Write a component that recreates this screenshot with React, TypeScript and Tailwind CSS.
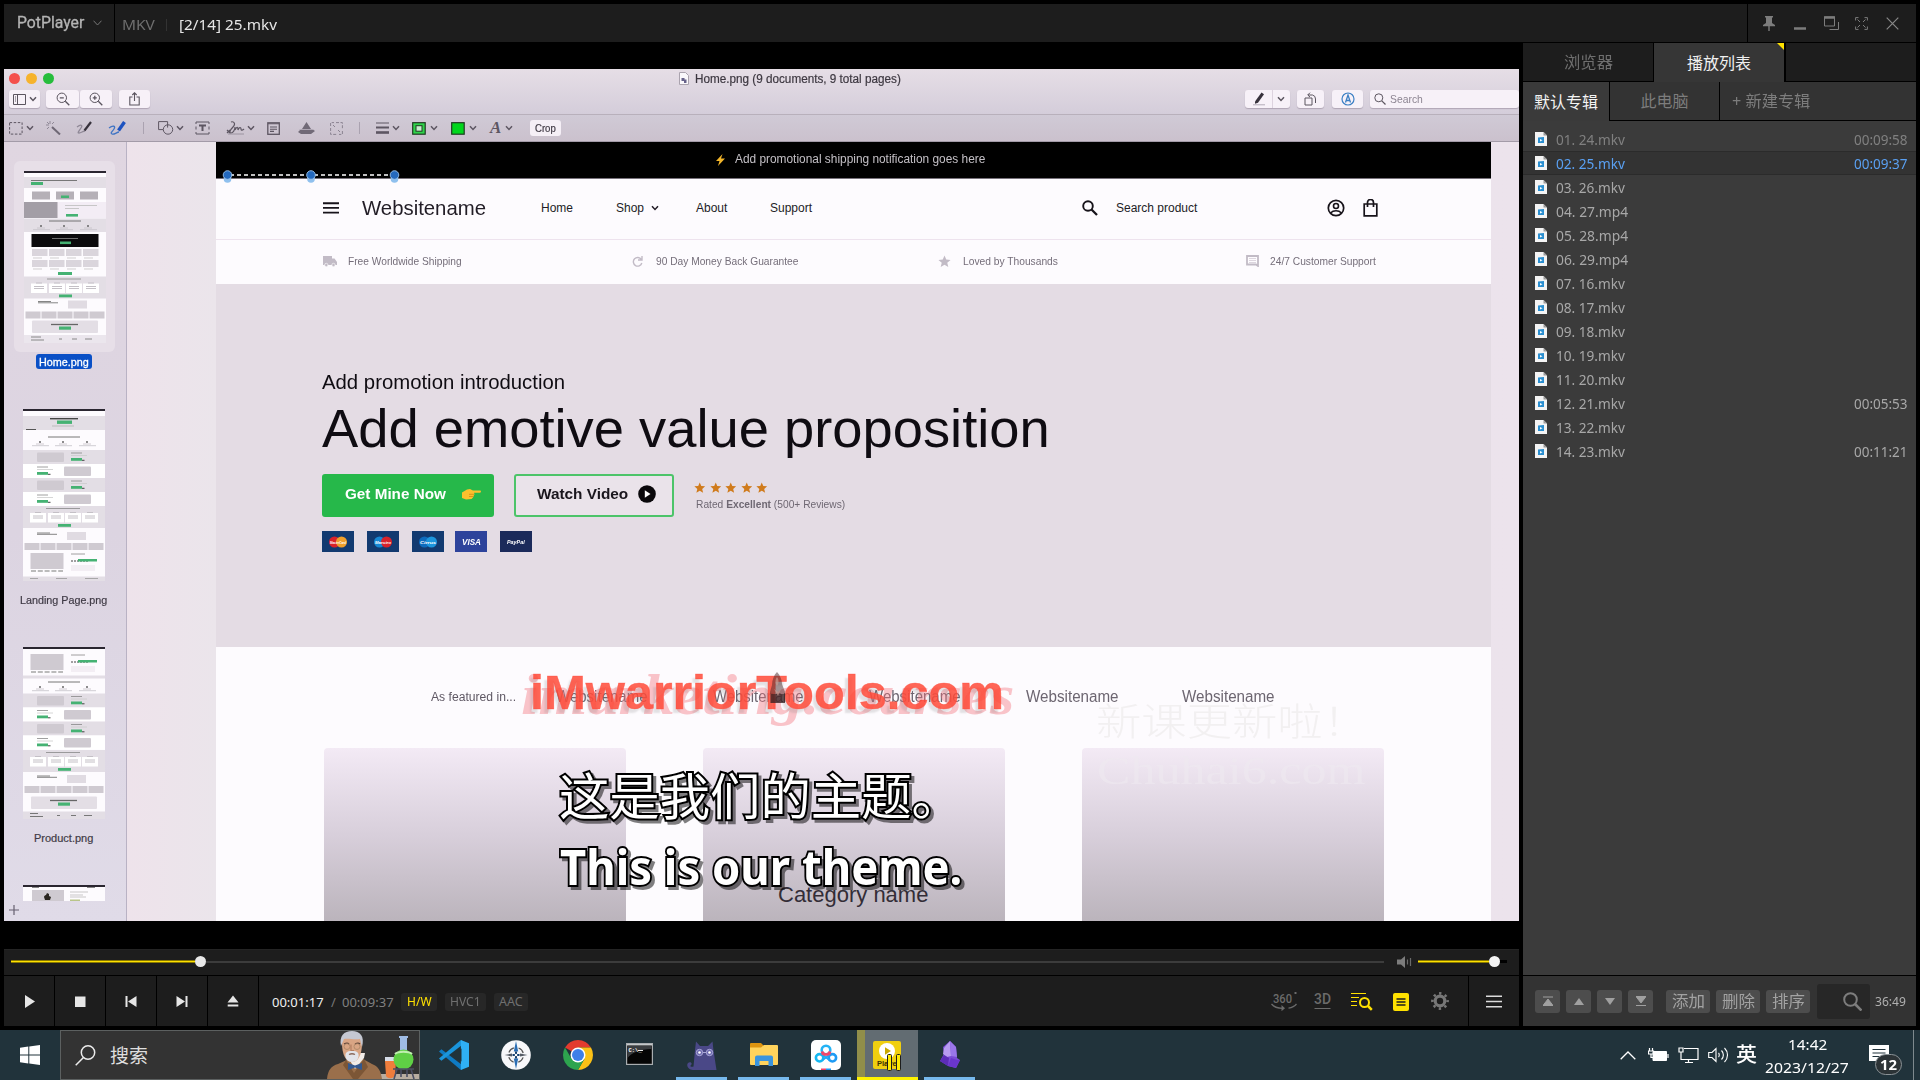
import React, { useLayoutEffect, useRef, useState } from "react";

const UI = "font-['Noto_Sans','Noto_Sans_CJK_SC',sans-serif]";
const HELV = "font-['Liberation_Sans',sans-serif]";

/* One line of text condensed or expanded to a given width. */
function Fit({ w, className = "", children }: { w: number; className?: string; children: React.ReactNode }) {
  const ref = useRef<HTMLSpanElement>(null);
  const [k, setK] = useState(1);
  useLayoutEffect(() => {
    if (ref.current) setK(w / ref.current.offsetWidth);
  }, [w]);
  return (
    <span className={`block shrink-0 whitespace-nowrap ${className}`} style={{ width: w }}>
      <span ref={ref} className="inline-block origin-left" style={{ transform: `scaleX(${k})` }}>
        {children}
      </span>
    </span>
  );
}

function Svg({ w, h, className = "", children, vb }: { w: number; h: number; className?: string; children: React.ReactNode; vb?: string }) {
  return (
    <svg width={w} height={h} viewBox={vb ?? `0 0 ${w} ${h}`} fill="none" className={`block shrink-0 ${className}`}>
      {children}
    </svg>
  );
}

const Chevron = ({ className = "" }: { className?: string }) => (
  <Svg w={8} h={6} className={className}>
    <path d="M1 1.200 4 4.400 7 1.200" stroke="currentColor" strokeWidth="1.500" />
  </Svg>
);

/* ---------- Title bar ---------- */
function TitleBar() {
  return (
    <div className={`mx-1 mt-1 flex h-[38px] shrink-0 items-center bg-[#1d1d1d] ${UI}`}>
      <div className="flex h-full w-[111px] items-center border-r border-black pl-[13px] pb-px">
        <Fit w={67} className="font-['Roboto',sans-serif] text-[16px] leading-5 text-[#b4b4b4] [-webkit-text-stroke:0.300px_#b4b4b4]">PotPlayer</Fit>
        <Svg w={9} h={6} className="ml-[9px]">
          <path d="M.5.7 4.500 5 8.500.7" stroke="#777" />
        </Svg>
      </div>
      <Fit w={33} className="ml-[7px] mt-[2px] text-[15px] leading-5 text-[#6f6f6f]">MKV</Fit>
      <div className="ml-[11px] mt-1 h-3 w-px bg-[#333]" />
      <Fit w={98} className="ml-[12px] mt-[2px] text-[15px] leading-5 text-[#e6e6e6]">[2/14] 25.mkv</Fit>
      <div className="ml-auto flex h-full w-[169px] items-center border-l border-black pl-[14px] text-[#7c7c7c]">
        <Svg w={14} h={15}>
          <path d="M3 0h8v1.500H10V7l3 2v1.300H7.700V15H6.300v-4.700H1V9l3-2V1.500H3Z" fill="#7c7c7c" />
        </Svg>
        <Svg w={12} h={3} className="ml-[18px] mt-[10px]">
          <path d="M0 1.500h12" stroke="#7c7c7c" strokeWidth="2.500" />
        </Svg>
        <Svg w={15} h={15} className="ml-[18px]">
          <path d="M.5 1h10v9H.5Z" stroke="#7c7c7c" />
          <path d="M0 1.500h11" stroke="#7c7c7c" strokeWidth="2.500" />
          <path d="M14.500 6v7.500H5.500" stroke="#7c7c7c" />
        </Svg>
        <Svg w={13} h={13} className="ml-[16px]">
          <path d="M.6 3.500V.6h2.900M9.500.6h2.900v2.900M12.400 9.500v2.900H9.500M3.500 12.400H.6V9.500M2.500 2.500 5 5M10.500 2.500 8 5M10.500 10.500 8 8M2.500 10.500 5 8" stroke="#7c7c7c" />
        </Svg>
        <Svg w={13} h={13} className="ml-[18px]">
          <path d="m.7.7 11.600 11.600M12.300.7.700 12.300" stroke="#888" strokeWidth="1.200" />
        </Svg>
      </div>
    </div>
  );
}

/* ---------- Page thumbnails ---------- */
const G = "#45b273";
const gray = "#cfcad1";
const pale = "#e3dee5";

function FourQuotes({ y }: { y: number }) {
  return (
    <g>
      <rect y={y} width="82" height="22" fill={pale} />
      <path d={`M23 ${y + 2.5}h34`} stroke="#888" strokeWidth=".8" />
      {[7, 25, 42, 59].map((x) => (
        <g key={x}>
          <rect x={x} y={y + 7} width="16" height="9.500" fill="#fff" />
          <path d={`M${x + 5} ${y + 6.5}h6M${x + 3} ${y + 10}h10M${x + 3} ${y + 12}h10`} stroke="#c4c0c6" strokeWidth="1" />
        </g>
      ))}
      <rect x="35" y={y + 18} width="13" height="2.800" fill={G} />
    </g>
  );
}
function Rows({ y }: { y: number }) {
  return (
    <g>
      {[0, 1, 2, 3].map((i) => {
        const t = y + i * 14;
        const even = i % 2 === 0;
        const bx = even ? 14 : 41;
        const gx = even ? 48 : 14;
        return (
          <g key={i}>
            <rect y={t} width="82" height="14" fill={even ? pale : "#fff"} />
            <rect x={bx} y={t + 2.5} width="27" height="9.500" rx="1" fill={gray} />
            <path d={`M${gx} ${t + 3}h11`} stroke="#888" strokeWidth=".8" />
            <path d={`M${gx} ${t + 5.5}h16`} stroke="#ccc" strokeWidth=".8" />
            <rect x={gx} y={t + 8} width="11" height="2.800" fill={G} />
            <path d={`M${gx + 11} ${t + 10.3}h2.500`} stroke="#444" strokeWidth="1" />
          </g>
        );
      })}
    </g>
  );
}
function Five({ y }: { y: number }) {
  return (
    <g>
      <path d={`M14 ${y - 10}h13M14 ${y - 8.7}h20`} stroke="#777" strokeWidth=".9" />
      <rect x="44" y={y - 11} width="19" height="8" fill="#e0dbe2" />
      {[1.5, 17.5, 33.5, 49.5, 65.5].map((x) => (
        <rect key={x} x={x} y={y} width="15" height="7" fill={gray} />
      ))}
    </g>
  );
}
function Gallery({ y }: { y: number }) {
  return (
    <g>
      <rect x="7.500" y={y} width="33" height="16" fill={gray} />
      <path d={`M8 ${y + 18}h32`} stroke="#bbb" strokeWidth="2" strokeDasharray="5 1.800" />
      <path d={`M48 ${y + 1}h14`} stroke="#888" strokeWidth=".8" />
      <path d={`M48 ${y + 8}h18`} stroke="#444" strokeWidth="1" strokeDasharray="2 1" />
      <rect x="55" y={y + 6} width="19" height="2.500" fill={G} />
      <rect x="48" y={y + 12} width="24" height="6" fill="#f3eef4" />
    </g>
  );
}
function Three({ y }: { y: number }) {
  return (
    <g>
      <path d={`M25 ${y}h32`} stroke="#666" strokeWidth=".9" />
      {[17, 40, 64].map((x) => (
        <g key={x}>
          <circle cx={x} cy={y + 5} r="1" fill="#666" />
          <path d={`M${x - 4} ${y + 7}h8M${x - 8} ${y + 8.7}h17`} stroke="#c4c0c6" strokeWidth=".8" />
        </g>
      ))}
    </g>
  );
}
function Cta({ y }: { y: number }) {
  return (
    <g>
      <rect x="8" y={y} width="66" height="12.500" rx="1" fill={pale} />
      <path d={`M27 ${y + 4}h27`} stroke="#666" strokeWidth="1.300" />
      <rect x="35" y={y + 6} width="12" height="3.200" fill={G} />
    </g>
  );
}
function Thumb({ kind, h = 172 }: { kind: "home" | "landing" | "product" | "last"; h?: number }) {
  return (
    <svg width="82" height={h} viewBox={`0 0 82 ${h}`} className="block shrink-0 overflow-hidden">
      <rect width="82" height={h} fill="#fdfbfe" />
      <rect width="82" height="2" fill="#2a2630" />
      {kind === "home" && (
        <g>
          <rect y="6" width="82" height="11" fill={pale} />
          <path d="M7 9.500h46" stroke="#777" strokeWidth="1.200" />
          <rect x="7" y="11" width="12" height="3" fill={G} />
          <rect x="8" y="20.500" width="18" height="8" fill="#b5b0b7" />
          <rect x="32" y="20.500" width="18" height="8" fill="#b5b0b7" />
          <rect x="56" y="20.500" width="18" height="8" fill="#b5b0b7" />
          <rect x="37" y="24.500" width="8" height="2.500" fill={G} />
          <rect y="31" width="82" height="16" fill="#f3edf5" />
          <rect y="31" width="33.500" height="16" fill="#a39ea6" />
          <path d="M41 34.500h32M41 37.500h14" stroke="#bbb" strokeWidth=".8" />
          <rect x="42" y="43" width="12" height="2.600" fill={G} />
          <rect y="47.500" width="82" height="13.500" fill={pale} />
          <Three y={50} />
          <rect x="7.500" y="63" width="67" height="13" fill="#0c0b0d" />
          <path d="M28 67.500h26" stroke="#888" strokeWidth=".8" />
          <rect x="36" y="70.500" width="11" height="2.600" fill={G} />
          {[8, 25, 42, 59].map((x) => (
            <g key={x}>
              <rect x={x} y="78" width="15.500" height="7" fill="#dad5dc" />
              <rect x={x} y="89" width="15.500" height="7" fill="#dad5dc" />
              <path d={`M${x + 1} 87h9M${x + 1} 98h9`} stroke="#bbb" strokeWidth=".7" />
            </g>
          ))}
          <rect x="34" y="101" width="14" height="3" fill={G} />
          <FourQuotes y={105.5} />
          <Five y={140.5} />
          <Cta y={149.5} />
          <rect y="164" width="82" height="8" fill="#ebe6ed" />
          <path d="M7 166h10M7 169h13M35 168h3M48 168h5M61 168h7" stroke="#888" strokeWidth="1" />
        </g>
      )}
      {kind === "landing" && (
        <g>
          <rect y="7" width="82" height="14" fill={pale} />
          <path d="M27 9.700h28" stroke="#444" strokeWidth="1.400" />
          <rect x="34" y="11.500" width="15" height="3.400" fill={G} />
          <path d="M29 17h22" stroke="#bbb" />
          <path d="M3 20.500h10" stroke="#555" />
          <Three y={28} />
          <Rows y={41} />
          <FourQuotes y={97} />
          <Five y={134} />
          <Gallery y={144} />
          <rect y="167.500" width="82" height="4.500" fill={pale} />
          <path d="M7 169.500h8M33 169.500h11M62 169.500h13" stroke="#999" strokeWidth=".8" />
        </g>
      )}
      {kind === "product" && (
        <g>
          <Gallery y={7} />
          <rect y="28.500" width="82" height="3" fill={pale} />
          <Three y={35} />
          <Rows y={46.5} />
          <FourQuotes y={103} />
          <Five y={139} />
          <Cta y={149.5} />
          <rect y="164.500" width="82" height="7.500" fill={pale} />
          <path d="M7 166.500h8M7 169.500h13M34 168.500h3M48 168.500h5M61 168.500h8" stroke="#777" strokeWidth="1" />
        </g>
      )}
      {kind === "last" && (
        <g>
          <path d="M9 2.500h7M64 2.500h8" stroke="#888" />
          <rect x="9" y="5" width="32" height="11" fill={gray} />
          <path d="M21 12c0-1 1-2 2-2l1-2 2 1v2l2 1-1 3h-5Z" fill="#2a2620" />
          <path d="M47 7h18M47 10h13M47 12h16" stroke="#bbb" strokeWidth=".8" />
          <rect x="47" y="14.500" width="10" height="1.500" fill="#b9c58a" />
        </g>
      )}
    </svg>
  );
}

/* ---------- Preview window inside the video ---------- */
const btn = "flex h-[18px] shrink-0 items-center rounded-[3px] bg-[#f7f1f8] text-[#5b555f] shadow-[0_1px_1px_rgba(120,105,125,0.4)]";

function PreviewHeader() {
  return (
    <div className="flex h-[46px] shrink-0 flex-col border-b border-[#b8b0bb] bg-gradient-to-b from-[#e6dee6] to-[#d4cdda]">
      <div className="flex h-[18px] items-center pl-[5px]">
        <div className="h-[11px] w-[11px] rounded-full bg-[#f4504c]" />
        <div className="ml-[6px] h-[11px] w-[11px] rounded-full bg-[#f6b32c]" />
        <div className="ml-[6px] h-[11px] w-[11px] rounded-full bg-[#26bd3c]" />
        <Svg w={10} h={13} className="ml-[625px]">
          <path d="M.5.5h6l3 3v9h-9Z" fill="#faf8fb" stroke="#aaa3ae" />
          <path d="M2.500 6h3v1.500h2V11H5V9H2.500Z" fill="#67628a" />
        </Svg>
        <Fit w={206} className="ml-[6px] mt-px text-[12px] leading-4 text-[#3d3841] [-webkit-text-stroke:0.200px_#3d3841]">Home.png (9 documents, 9 total pages)</Fit>
      </div>
      <div className="flex h-[24px] items-center pl-[5px]">
        <div className={`${btn} w-[31px] pl-1`}>
          <Svg w={13} h={11}>
            <path d="M.5.5h12v10H.5ZM4.500.5v10M2 3h1M2 5h1M2 7h1" stroke="currentColor" />
          </Svg>
          <Chevron className="ml-[3px]" />
        </div>
        <div className={`${btn} ml-[6px] w-[33px] justify-center`}>
          <Svg w={14} h={14}>
            <circle cx="5.800" cy="5.800" r="4.700" stroke="currentColor" />
            <path d="m9.300 9.300 4 4M3.800 5.800h4" stroke="currentColor" strokeWidth="1.300" />
          </Svg>
        </div>
        <div className={`${btn} ml-px w-[32px] justify-center`}>
          <Svg w={14} h={14}>
            <circle cx="5.800" cy="5.800" r="4.700" stroke="currentColor" />
            <path d="m9.300 9.300 4 4M3.800 5.800h4M5.800 3.800v4" stroke="currentColor" strokeWidth="1.300" />
          </Svg>
        </div>
        <div className={`${btn} ml-[7px] w-[31px] justify-center`}>
          <Svg w={11} h={14}>
            <path d="M3.500 5H.8v8h9.400V5H7.500M5.500 9V1M3.300 3l2.200-2.200L7.700 3" stroke="currentColor" strokeWidth="1.100" />
          </Svg>
        </div>
        <div className={`${btn} ml-[1095px] w-[45px]`}>
          <Svg w={15} h={14} className="ml-[7px]">
            <path d="M3 9.500 9.500.5l2.500 1.700-6 8.600-3 1Z" fill="#37323c" />
            <path d="M1 12.800h12" stroke="#b3acb8" />
          </Svg>
          <div className="ml-[5px] h-full w-px bg-[#ddd3df]" />
          <Chevron className="ml-[4px]" />
        </div>
        <div className={`${btn} ml-[7px] w-[27px] justify-center`}>
          <Svg w={13} h={14}>
            <path d="M1 6h7v7H1ZM4 3h4.500a4 4 0 0 1 3 4v4M6 .7 3.700 3 6 5" stroke="currentColor" />
          </Svg>
        </div>
        <div className={`${btn} ml-[8px] w-[31px] justify-center`}>
          <Svg w={14} h={14}>
            <circle cx="7" cy="7" r="6" stroke="#3b7fc4" strokeWidth="1.200" />
            <path d="M4.500 10.500 7 3l2.500 7.500M5.500 8.500h3" stroke="#3b7fc4" strokeWidth="1.300" />
          </Svg>
        </div>
        <div className={`${btn} ml-[7px] w-[149px] pl-1`}>
          <Svg w={12} h={12}>
            <circle cx="4.800" cy="4.800" r="4" stroke="currentColor" />
            <path d="m7.800 7.800 3.700 3.700" stroke="currentColor" strokeWidth="1.200" />
          </Svg>
          <Fit w={33} className="ml-[4px] text-[11px] leading-4 text-[#8d8592]">Search</Fit>
        </div>
      </div>
    </div>
  );
}

function PreviewTools() {
  return (
    <div className="flex h-[27px] shrink-0 items-center border-b border-[#a39ba8] bg-gradient-to-b from-[#d0cad6] to-[#cbc1cd] pl-[5px] text-[#5d5662]">
      <Svg w={14} h={13}>
        <rect x=".6" y=".6" width="12.500" height="11.500" stroke="currentColor" strokeDasharray="2.500 1.600" />
      </Svg>
      <Chevron className="ml-[3px]" />
      <Svg w={15} h={14} className="ml-[12px]">
        <path d="m6 6 8 7.500" stroke="#6f6875" strokeWidth="2" />
        <path d="M4 0v3M0 4h3M1 1l2 2M8 1 6 3M1 8l2-2" stroke="#8f8896" />
      </Svg>
      <Svg w={17} h={14} className="ml-[15px]">
        <path d="M1 6c4-3 6-2 4 1s-4 5-2 5 4-2 6-2" stroke="#8f8896" strokeWidth="1.300" />
        <path d="M8.500 9.500 15 1" stroke="#37323c" strokeWidth="2.200" />
      </Svg>
      <Svg w={19} h={14} className="ml-[15px]">
        <path d="M1 7c4-3 7-2 5 1s-4 4-2 5 5-2 7-2" stroke="#3f74c4" strokeWidth="1.300" />
        <path d="M10.500 9.500 16.500 1" stroke="#1d53c0" strokeWidth="3.400" />
      </Svg>
      <div className="ml-[16px] h-3 w-px bg-[#aaa2b0]" />
      <Svg w={16} h={14} className="ml-[14px]">
        <path d="M.6.6h9v6M.6.6v8H5" stroke="currentColor" />
        <circle cx="10" cy="8.500" r="4.700" stroke="currentColor" />
      </Svg>
      <Chevron className="ml-[2px]" />
      <Svg w={15} h={14} className="ml-[11px]">
        <path d="M1 3V1h13v2M1 11v2h13v-2M1 5.500v3M14 5.500v3" stroke="currentColor" />
        <path d="M4 4.500h7M7.500 4v6" stroke="currentColor" strokeWidth="2" />
      </Svg>
      <Svg w={20} h={14} className="ml-[16px]">
        <path d="M5 1c3-1 5 2 2 5s-4 6-2 6 4-3 4-6M1 9l3 3M4 9l-3 3M9 9c2-4 3-3 3 0 1-3 3-3 3-1s2 1 3 0" stroke="currentColor" strokeWidth="1.200" />
        <path d="M2 13h16" stroke="#8f8896" strokeWidth=".8" />
      </Svg>
      <Chevron className="ml-[1px]" />
      <Svg w={13} h={13} className="ml-[12px]">
        <rect x=".8" y=".8" width="11.500" height="11.500" stroke="currentColor" strokeWidth="1.300" />
        <path d="M1 1.700h11M3 5h7M3 7.200h7M3 9.400h4" stroke="currentColor" strokeWidth="1.100" />
      </Svg>
      <Svg w={18} h={13} className="ml-[18px]">
        <path d="M8.500 0 13 7H4ZM0 10l3-3h11l3 2-4 3H3Z" fill="#716a77" />
        <path d="M1 7.500h15" stroke="#bdb5c2" strokeWidth=".8" />
      </Svg>
      <Svg w={13} h={13} className="ml-[14px]">
        <path d="M.6 4V.6H4M12.400 9v3.400H9M6 .6h6.400v6M.6 6v6.400H7M3 3l2 2M10 10 8 8" stroke="#8a8391" strokeDasharray="3 1.500" />
      </Svg>
      <div className="ml-[16px] h-3 w-px bg-[#aaa2b0]" />
      <Svg w={13} h={12} className="ml-[16px]">
        <path d="M0 1h13" stroke="currentColor" />
        <path d="M0 5.500h13" stroke="currentColor" strokeWidth="2" />
        <path d="M0 10.500h13" stroke="currentColor" strokeWidth="2.600" />
      </Svg>
      <Chevron className="ml-[3px]" />
      <Svg w={14} h={13} className="ml-[12px]">
        <rect x=".7" y=".7" width="12.500" height="11.500" fill="#2fd44a" stroke="#203a22" strokeWidth="1.200" />
        <rect x="4" y="3.700" width="6" height="5.500" fill="#c9efcf" stroke="#203a22" />
      </Svg>
      <Chevron className="ml-[4px]" />
      <Svg w={14} h={13} className="ml-[13px]">
        <rect x=".7" y=".7" width="12.500" height="11.500" fill="#00d71c" stroke="#203a22" strokeWidth="1.200" />
      </Svg>
      <Chevron className="ml-[4px]" />
      <span className="ml-[13px] w-[13px] font-['Liberation_Serif',serif] text-[17px] leading-4 font-bold italic">A</span>
      <Chevron className="ml-[2px]" />
      <div className="ml-[17px] flex h-4 w-[31px] items-center justify-center rounded-[3px] bg-[#f5eff6]">
        <Fit w={21} className="text-[10.500px] leading-4 text-[#3f3944] [-webkit-text-stroke:0.200px_#3f3944]">Crop</Fit>
      </div>
    </div>
  );
}

function Sidebar() {
  return (
    <div className="flex w-[123px] shrink-0 flex-col border-r border-[#b9b2c4] bg-gradient-to-b from-[#e0d6e1] via-[#dcd4e1] to-[#e0dbe8] text-[11px] text-[#3f3a45]">
      <div className="mt-[19px] ml-[10px] flex h-[191px] w-[101px] justify-center rounded-[6px] bg-[#e7dfe8] pt-[10px]">
        <Thumb kind="home" />
      </div>
      <div className="mt-[2px] ml-[32px] flex h-[15px] w-[56px] items-center justify-center rounded-[3px] bg-[#0a50c6]">
        <Fit w={50} className="leading-4 text-white [-webkit-text-stroke:0.300px_white]">Home.png</Fit>
      </div>
      <div className="mt-[40px] ml-[19px]"><Thumb kind="landing" /></div>
      <Fit w={87} className="mt-[11px] ml-[16px] leading-4 [-webkit-text-stroke:0.200px_#3f3a45]">Landing Page.png</Fit>
      <div className="mt-[39px] ml-[19px]"><Thumb kind="product" /></div>
      <Fit w={59} className="mt-[11px] ml-[30px] leading-4 [-webkit-text-stroke:0.200px_#3f3a45]">Product.png</Fit>
      <div className="mt-[39px] ml-[19px]"><Thumb kind="last" h={16} /></div>
      <Svg w={10} h={10} className="mt-[4px] ml-[5px]">
        <path d="M5 0v10M0 5h10" stroke="#666070" strokeWidth="1.200" />
      </Svg>
    </div>
  );
}

const Star = ({ s, c }: { s: number; c: string }) => (
  <Svg w={s} h={s} vb="0 0 24 24">
    <path d="m12 1 3.200 7.400 8 .7-6.100 5.300 1.900 7.900L12 18l-7 4.300 1.900-7.900L.8 9.100l8-.7Z" fill={c} />
  </Svg>
);

function PayCard({ bg, ml, children }: { bg: string; ml: string; children: React.ReactNode }) {
  return (
    <div className={`flex h-[21px] w-[32px] shrink-0 items-center justify-center ${ml} ${bg}`}>
      {children}
    </div>
  );
}
const Discs = ({ a, b, label }: { a: string; b: string; label: string }) => (
  <Svg w={24} h={12} vb="-2 0 24 12">
    <circle cx="6.500" cy="6" r="5.500" fill={a} />
    <circle cx="13.500" cy="6" r="5.500" fill={b} />
    <text x="10" y="7.500" textAnchor="middle" fontSize="4" fontWeight="bold" fontStyle="italic" fill="#fff" fontFamily="Liberation Sans" textLength="16" lengthAdjust="spacingAndGlyphs">{label}</text>
  </Svg>
);

const brandW = "text-[16px] leading-5 text-[#6d6671]";

function SitePage() {
  return (
    <div className="flex w-[1275px] shrink-0 flex-col bg-[#fdfbfe]">
      <div className="relative flex h-[37px] shrink-0 items-center border-b border-[#77717a] bg-black pb-px pl-[500px]">
        <Svg w={9} h={12}>
          <path d="M6.500 0 0 7h3.500L2 12l7-7.500H5Z" fill="#f2b52a" />
        </Svg>
        <Fit w={250} className="mt-[-1px] ml-[10px] text-[12.500px] leading-4 text-[#c4c0c6]">Add promotional shipping notification goes here</Fit>
        <Svg w={180} h={17} className="absolute top-[25px] left-[6px]">
          <path d="M8 8h161" stroke="#000" strokeWidth="2.500" />
          <path d="M8 8h161" stroke="#fff" strokeWidth="1.400" strokeDasharray="4 3" />
          {[5.5, 89, 172.5].map((x) => (
            <g key={x}>
              <circle cx={x} cy="12" r="3.800" fill="#8fc0ee" />
              <circle cx={x} cy="8" r="4.300" fill="#2469bd" stroke="#9cc4ec" strokeWidth=".9" />
            </g>
          ))}
        </Svg>
      </div>
      <div className="flex h-[61px] shrink-0 items-center border-b border-[#eee3ee] pb-[3px] text-[12px] leading-4 text-[#221d26]">
        <Svg w={16} h={12} className="ml-[107px]">
          <path d="M0 1.200h16M0 5.900h16M0 10.600h16" stroke="#17131a" strokeWidth="1.900" />
        </Svg>
        <Fit w={124} className="ml-[23px] text-[21px] leading-6">Websitename</Fit>
        <Fit w={32} className="ml-[55px]">Home</Fit>
        <Fit w={28} className="ml-[43px]">Shop</Fit>
        <Chevron className="ml-[7px]" />
        <Fit w={31} className="ml-[37px]">About</Fit>
        <Fit w={42} className="ml-[43px]">Support</Fit>
        <Svg w={16} h={16} className="ml-[270px]">
          <circle cx="6" cy="6" r="4.800" stroke="#17131a" strokeWidth="1.900" />
          <path d="m9.500 9.500 5.500 5.500" stroke="#17131a" strokeWidth="2.300" />
        </Svg>
        <Fit w={81} className="ml-[18px]">Search product</Fit>
        <Svg w={18} h={18} className="ml-[130px]">
          <circle cx="9" cy="9" r="7.700" stroke="#17131a" strokeWidth="1.700" />
          <circle cx="9" cy="7" r="2.500" stroke="#17131a" strokeWidth="1.600" />
          <path d="M3.500 14c3-3 8-3 11 0" stroke="#17131a" strokeWidth="1.600" />
        </Svg>
        <Svg w={15} h={18} className="ml-[18px]">
          <path d="M1.200 5h12.600v11.800H1.200ZM4.500 8V3.500a3 3 0 0 1 6 0V8" stroke="#17131a" strokeWidth="1.700" />
        </Svg>
      </div>
      <div className="flex h-[44px] shrink-0 items-center pb-[2px] text-[11px] leading-4 text-[#756e7a]">
        <Svg w={14} h={11} className="ml-[107px]">
          <path d="M0 0h9v2.500h2.500L14 6v3H0Z" fill="#c2bbc6" />
          <circle cx="3.300" cy="9" r="1.700" fill="#c2bbc6" stroke="#fff" strokeWidth=".6" />
          <circle cx="10.500" cy="9" r="1.700" fill="#c2bbc6" stroke="#fff" strokeWidth=".6" />
        </Svg>
        <Fit w={114} className="ml-[11px]">Free Worldwide Shipping</Fit>
        <Svg w={11} h={11} className="ml-[170px]">
          <path d="M9.300 3.500A4.300 4.300 0 1 0 9.800 7M10 0v4H6" stroke="#c2bbc6" strokeWidth="1.400" />
        </Svg>
        <Fit w={142} className="ml-[13px]">90 Day Money Back Guarantee</Fit>
        <div className="ml-[140px]"><Star s={13} c="#c2bbc6" /></div>
        <Fit w={95} className="ml-[12px]">Loved by Thousands</Fit>
        <Svg w={13} h={12} className="ml-[188px]">
          <path d="M1 1h11v10l-2-1.500H1Z" stroke="#c2bbc6" strokeWidth="1.800" />
          <path d="M3 3.500h7M3 5.500h7M3 7.500h7" stroke="#ddd6df" />
        </Svg>
        <Fit w={106} className="ml-[11px]">24/7 Customer Support</Fit>
      </div>
      <div className="flex h-[363px] shrink-0 flex-col bg-[#e4dce4] pl-[106px] text-[#0f0c12]">
        <Fit w={243} className="mt-[86px] text-[20.500px] leading-6">Add promotion introduction</Fit>
        <Fit w={728} className="mt-[5px] text-[53.500px] leading-[60px]">Add emotive value proposition</Fit>
        <div className="mt-[15px] flex h-[43px]">
          <div className="flex w-[172px] items-center rounded-[3px] bg-[#26b84a] pl-[23px] pb-[3px]">
            <Fit w={101} className="text-[14.500px] leading-5 font-bold text-white">Get Mine Now</Fit>
            <Svg w={19} h={12} className="ml-[16px]">
              <path d="M0 4.500 5 1.500 8 1l3 1.500h7c1.300 0 1.300 2.200 0 2.200H12l.5 1.500-.8 1.600-.7 1.600-1.500 1.500L4 11.500 0 10Z" fill="#fbc02d" />
              <path d="M7 6.300h5M7 8.500h4.500" stroke="#d88f16" strokeWidth=".9" />
            </Svg>
          </div>
          <div className="ml-[20px] flex w-[160px] items-center rounded-[3px] border-2 border-[#4cc469] bg-[#eae3ea] pl-[21px] pb-[3px]">
            <Fit w={91} className="text-[14.500px] leading-5 font-bold text-[#1a161d]">Watch Video</Fit>
            <Svg w={18} h={18} className="ml-[10px]">
              <circle cx="9" cy="9" r="8.800" fill="#0a080b" />
              <path d="M6.800 5.300v7.400L12.500 9Z" fill="#fff" />
            </Svg>
          </div>
          <div className="ml-[20px] flex flex-col">
            <div className="mt-[8px] flex gap-[4px]">
              {[0, 1, 2, 3, 4].map((i) => <Star key={i} s={11.5} c="#d07b1c" />)}
            </div>
            <Fit w={149} className="mt-[2px] ml-[2px] text-[10.500px] leading-4 text-[#6f6873]">Rated <b>Excellent</b> (500+ Reviews)</Fit>
          </div>
        </div>
        <div className="mt-[14px] flex">
          <PayCard bg="bg-[#123a70]" ml="ml-0"><Discs a="#d9222a" b="#f0a02a" label="MasterCard" /></PayCard>
          <PayCard bg="bg-[#123a70]" ml="ml-[13px]"><Discs a="#1687d4" b="#d9222a" label="Maestro" /></PayCard>
          <PayCard bg="bg-[#123a70]" ml="ml-[13px]"><Discs a="#0d6bbd" b="#1c96dd" label="Cirrus" /></PayCard>
          <PayCard bg="bg-[#2d439b]" ml="ml-[11px]"><Fit w={19} className="text-[9px] leading-3 font-bold text-white italic">VISA</Fit></PayCard>
          <PayCard bg="bg-[#1b2a5a]" ml="ml-[13px]"><Fit w={18} className="text-[6px] leading-3 font-bold text-white italic">PayPal</Fit></PayCard>
        </div>
      </div>
      <div className="relative flex h-[274px] flex-col">
        <div className="flex h-[101px] items-center pb-[1px]">
          <Fit w={85} className="ml-[215px] text-[12px] leading-4 text-[#5f5864]">As featured in...</Fit>
          <Fit w={92} className={`ml-[40px] ${brandW}`}>Websitename</Fit>
          <Fit w={91} className={`ml-[65px] ${brandW}`}>Websitename</Fit>
          <Fit w={92} className={`ml-[65px] ${brandW}`}>Websitename</Fit>
          <Fit w={93} className={`ml-[65px] ${brandW}`}>Websitename</Fit>
          <Fit w={93} className={`ml-[63px] mt-[-1px] ${brandW}`}>Websitename</Fit>
        </div>
        <div className="flex flex-1 gap-[77px] pl-[108px]">
          {[0, 1, 2].map((i) => (
            <div key={i} className="flex h-full w-[302px] justify-center rounded-t-[4px] bg-gradient-to-b from-[#f3eaf5] via-[#d8cfdb] to-[#bbb4bc]">
              {i === 1 && <Fit w={150} className="mt-[135px] ml-[-2px] text-[22px] leading-6 text-[#332d37]">Category name</Fit>}
            </div>
          ))}
        </div>
        {/* translucent watermarks */}
        <Fit w={493} className="absolute top-[16px] left-[305px] font-['Liberation_Serif',serif] text-[56px] leading-[64px] font-bold text-[#f2707a]/40 italic">imarketing.courses</Fit>
        <Fit w={474} className="absolute top-[17px] left-[314px] text-[49px] leading-[56px] font-bold text-[#ff4a38]/85 [text-shadow:-3px_4px_2px_rgba(120,120,120,0.200)] [-webkit-text-stroke:0.600px_rgba(255,74,56,0.600)]">iMwarriorTools.com</Fit>
        <Svg w={18} h={32} className="absolute top-[25px] left-[552px]">
          <path d="M9 0c3 3 5 8 5 12l3 8v11H2V20l2-7C4 8 6 3 9 0Z" fill="#4a2a2a" fillOpacity=".5" />
          <path d="M3 22h14v9H3Z" fill="#2b1c1e" fillOpacity=".55" />
          <path d="M9 5c2 2 2 7 0 9-2-2-2-7 0-9ZM6 17l4 3 3-3-3 7Z" fill="#c99a90" fillOpacity=".7" />
        </Svg>
        <Fit w={272} className="absolute top-[50px] left-[880px] font-['Noto_Sans_CJK_SC',sans-serif] text-[38px] leading-[44px] font-light text-[#d9d6d4]/30">新课更新啦！</Fit>
        <Fit w={268} className="absolute top-[102px] left-[881px] font-['Liberation_Serif',serif] text-[40px] leading-[44px] text-[#efeaf0]/60">Chuhai6.com</Fit>
      </div>
    </div>
  );
}

const sub = "text-white [-webkit-text-stroke:4px_#000] [paint-order:stroke_fill] drop-shadow-[3px_3px_0_rgba(0,0,0,0.5)]";

function Video() {
  return (
    <div className={`relative mt-[26px] flex h-[852px] w-[1515px] shrink-0 flex-col overflow-hidden ${HELV}`}>
      <PreviewHeader />
      <PreviewTools />
      <div className="flex min-h-0 flex-1 overflow-hidden bg-gradient-to-r from-[#efe2ea] via-[#ebe4ea] to-[#ece3ec]">
        <Sidebar />
        <div className="w-[89px] shrink-0 bg-gradient-to-r from-[#eee3eb] to-[#ebe5eb]" />
        <SitePage />
      </div>
      <div className={`absolute top-[689px] left-[555px] flex flex-col ${UI}`}>
        <Fit w={403} className={`font-['Noto_Sans_CJK_SC',sans-serif] text-[50px] leading-[70px] ${sub}`}>这是我们的主题。</Fit>
        <Fit w={402} className={`mt-[3px] ml-[1px] text-[49px] leading-[70px] font-bold ${sub}`}>This is our theme.</Fit>
      </div>
    </div>
  );
}

/* ---------- Player controls ---------- */
function SeekBar() {
  return (
    <div className="flex h-[26px] shrink-0 items-center border-t border-[#242424] bg-[#1d1d1d] pb-[2px] pl-[7px]">
      <div className="h-[3px] w-[184px] border-y border-[#8a7a00] bg-[#ffe100]" />
      <div className="h-[11px] w-[11px] shrink-0 rounded-full bg-[#e8e8e8]" />
      <div className="h-[2px] w-[1178px] bg-[#3c3c3c]" />
      <Svg w={15} h={12} className="ml-[13px]">
        <path d="M0 3.500h4L8 0v12L4 8.500H0Z" fill="#7c7c7c" />
        <path d="M10.500 3.500v5M13.500 2v8" stroke="#6a6a6a" strokeWidth="1.200" />
      </Svg>
      <div className="ml-[6px] h-[3px] w-[71px] border-y border-[#8a7a00] bg-[#ffe100]" />
      <div className="h-[11px] w-[11px] shrink-0 rounded-full bg-[#f2f2f2]" />
      <div className="h-[3px] w-[7px] bg-black" />
    </div>
  );
}

const badge = "flex h-[18px] shrink-0 items-center justify-center rounded-[3px] bg-[#272727] text-[12.500px] leading-4 mt-[2px]";

function Controls() {
  const paths = [
    "M3 1 13 7.500 3 14Z",
    "M2 2.500h10.500v10.500H2Z",
    "M1.500 2h2v11h-2ZM12.500 2v11L4 7.500Z",
    "M10.500 2h2v11h-2ZM1.500 2v11l8.500-5.500Z",
    "M7 1.500 12.500 8.500H1.500ZM1.700 10.500h10.600v2H1.700Z",
  ];
  return (
    <div className={`mt-px flex h-[50px] shrink-0 items-center bg-[#1d1d1d] ${UI}`}>
      {paths.map((d) => (
        <div key={d} className="flex h-full w-[51px] items-center justify-center border-r border-black">
          <Svg w={15} h={15}>
            <path d={d} fill="#e6e6e6" />
          </Svg>
        </div>
      ))}
      <Fit w={52} className="mt-[2px] ml-[13px] text-[13px] leading-4 text-[#f0f0f0]">00:01:17</Fit>
      <Fit w={5} className="mt-[2px] ml-[7px] text-[13px] leading-4 text-[#777]">/</Fit>
      <Fit w={52} className="mt-[2px] ml-[6px] text-[13px] leading-4 text-[#808080]">00:09:37</Fit>
      <div className={`${badge} ml-[7px] w-[36px] text-[#ffe100]`}><Fit w={25}>H/W</Fit></div>
      <div className={`${badge} ml-[8px] w-[41px] text-[#707070]`}><Fit w={31}>HVC1</Fit></div>
      <div className={`${badge} ml-[8px] w-[34px] text-[#707070]`}><Fit w={24}>AAC</Fit></div>
      <div className="ml-auto flex h-full items-center">
        <Svg w={26} h={20}>
          <text x="2" y="12" fontSize="13.500" fontWeight="500" fill="#6b6b6b" fontFamily="Roboto" textLength="19" lengthAdjust="spacingAndGlyphs">360</text>
          <rect x="23.500" y="1" width="2" height="2" fill="#6b6b6b" />
          <path d="M.5 13c2.500 3 6 4.300 11 4.300M25.500 13c-2 2.500-4.500 3.600-8 4.200" stroke="#6b6b6b" strokeWidth="1.300" />
          <path d="m10.500 14 3.500 3.200-3.500 3Z" fill="#6b6b6b" />
        </Svg>
        <Svg w={18} h={20} className="ml-[17px]">
          <text x="0" y="13" fontSize="15.500" fontWeight="500" fill="#6b6b6b" fontFamily="Roboto" textLength="17" lengthAdjust="spacingAndGlyphs">3D</text>
          <path d="M.5 17.500h16" stroke="#6b6b6b" />
        </Svg>
        <Svg w={22} h={19} className="ml-[19px]">
          <path d="M0 1.500h15M0 5.500h8M0 9.500h6M0 13.500h6" stroke="#ffe100" strokeWidth="1.200" />
          <circle cx="13.500" cy="10.500" r="4.500" stroke="#ffe100" strokeWidth="2" />
          <path d="m17 14 3.800 3.800" stroke="#ffe100" strokeWidth="2.500" />
        </Svg>
        <Svg w={16} h={18} className="mt-[2px] ml-[20px]">
          <rect width="16" height="18" rx="2" fill="#ffe100" />
          <path d="M3.500 6h9M3.500 9h9M3.500 12h9" stroke="#1d1d1d" strokeWidth="1.300" />
        </Svg>
        <Svg w={18} h={18} className="ml-[22px]">
          <circle cx="9" cy="9" r="4.800" stroke="#777" strokeWidth="3.200" />
          <circle cx="9" cy="9" r="7.600" stroke="#777" strokeWidth="2.600" strokeDasharray="2.400 3.569" strokeDashoffset="1.200" />
        </Svg>
        <div className="ml-[19px] flex h-full w-[51px] items-center justify-center border-l border-black">
          <Svg w={16} h={13} className="mt-px">
            <path d="M0 1.200h16M0 6.500h16M0 11.800h16" stroke="#dcdcdc" strokeWidth="1.500" />
          </Svg>
        </div>
      </div>
    </div>
  );
}

/* ---------- Playlist ---------- */
const items: [string, string][] = [
  ["01. 24.mkv", "00:09:58"], ["02. 25.mkv", "00:09:37"], ["03. 26.mkv", ""], ["04. 27.mp4", ""],
  ["05. 28.mp4", ""], ["06. 29.mp4", ""], ["07. 16.mkv", ""], ["08. 17.mkv", ""], ["09. 18.mkv", ""],
  ["10. 19.mkv", ""], ["11. 20.mkv", ""], ["12. 21.mkv", "00:05:53"], ["13. 22.mkv", ""], ["14. 23.mkv", "00:11:21"],
];

const footBtn = "flex h-[23px] shrink-0 items-center justify-center rounded-[3px] bg-[#4d4d4d]";

function Playlist() {
  const arrows = [
    "M0 1h10M5 3l5 6.500H0Z",
    "M5 2l5 7H0Z",
    "M5 9 0 2h10Z",
    "M5 7 0 .5h10ZM0 9.500h10",
  ];
  return (
    <div className={`mt-px flex h-[983px] w-[393px] shrink-0 flex-col text-[16px] ${UI}`}>
      <div className="flex h-[39px] shrink-0 leading-6">
        <div className="flex h-[38px] w-[130px] items-center justify-center bg-[#1d1d1d] text-[#6f6f6f]"><Fit w={49}>浏览器</Fit></div>
        <div className="relative ml-px flex w-[130px] items-center justify-center bg-[#363636] text-[#f0f0f0]">
          <Fit w={64}>播放列表</Fit>
          <Svg w={7} h={7} className="absolute top-0 right-0">
            <path d="M0 0h7v7Z" fill="#ffe100" />
          </Svg>
        </div>
        <div className="ml-[2px] h-[38px] flex-1 bg-[#1d1d1d]" />
      </div>
      <div className="flex h-[39px] shrink-0 leading-6">
        <div className="flex w-[87px] items-center justify-center border-r border-black bg-[#3a3a3a] text-[#f4f4f4]"><Fit w={64}>默认专辑</Fit></div>
        <div className="flex w-[110px] items-center justify-center border-r border-b border-black bg-[#333] text-[#7d7d7d]"><Fit w={48}>此电脑</Fit></div>
        <div className="flex flex-1 items-center border-b border-black bg-[#333] pl-[12px] text-[#7d7d7d]"><Fit w={78}>+ 新建专辑</Fit></div>
      </div>
      <div className="flex flex-1 flex-col bg-[#3b3b3b] pt-[6px] text-[15px] leading-5">
        {items.map(([name, time], i) => (
          <div
            key={name}
            className={`flex h-6 shrink-0 items-center border-y pr-2 pl-[12px] ${i === 1 ? "border-[#2b2b2b] bg-[#333] text-[#5aa0f2]" : i === 0 ? "border-transparent text-[#808080]" : "border-transparent text-[#a8a8a8]"}`}
          >
            <Svg w={12} h={14}>
              <path d="M0 0h8.500L12 3.500V14H0Z" fill="#f4f4f4" />
              <path d="M8.500 0v3.500H12Z" fill="#9a9a9a" />
              <path d="M3 5.500 9 5v6H3Z" fill="#2b8fd0" />
              <path d="m5 7 2.500 1.300L5 9.600Z" fill="#fff" />
            </Svg>
            <Fit w={name.endsWith("4") ? 72 : 69} className="mt-[-1px] ml-[9px]">{name}</Fit>
            {time && <Fit w={54} className="mt-[-1px] ml-auto">{time}</Fit>}
          </div>
        ))}
      </div>
      <div className="mt-px flex h-[50px] shrink-0 items-center bg-[#333] pl-[12px] text-[#a2a2a2]">
        {arrows.map((d, i) => (
          <div key={d} className={`${footBtn} w-[25px] ${i ? "ml-[6px]" : ""}`}>
            <Svg w={10} h={11}>
              <path d={d} fill="#a0a0a0" stroke="#a0a0a0" strokeWidth={i === 0 || i === 3 ? 1 : 0} />
            </Svg>
          </div>
        ))}
        <div className={`${footBtn} ml-[13px] w-[44px]`}><Fit w={33}>添加</Fit></div>
        <div className={`${footBtn} ml-[6px] w-[44px]`}><Fit w={33}>删除</Fit></div>
        <div className={`${footBtn} ml-[6px] w-[44px]`}><Fit w={33}>排序</Fit></div>
        <div className="ml-[7px] flex h-[35px] w-[53px] items-center justify-end rounded-[3px] bg-[#272727] pr-[8px]">
          <Svg w={19} h={19}>
            <circle cx="7.500" cy="7.500" r="6.300" stroke="#7d7d7d" strokeWidth="2" />
            <path d="m12 12 6.500 6.500" stroke="#7d7d7d" strokeWidth="2.600" />
          </Svg>
        </div>
        <Fit w={31} className="mt-px ml-[5px] text-[12.500px] leading-4 text-[#b0b0b0]">36:49</Fit>
      </div>
    </div>
  );
}

/* ---------- Windows taskbar ---------- */
function Scientist() {
  return (
    <Svg w={92} h={48}>
      <path d="M54 43h38v5H52Z" fill="#b9ada0" />
      <path d="M0 48c1-9 4-13 11-15l11-5h14l9 5c6 2 9 7 10 15Z" fill="#9a6f4b" />
      <path d="m19 29 8 13 10-14 4 8-10 12h-5L16 34Z" fill="#7c5636" />
      <path d="m22 28 6 10 9-11 1-5H21Z" fill="#f1ece8" />
      <path d="M15 12c0 12 4 19 10 19s10-7 10-19c0-7-4-9-10-9s-10 2-10 9Z" fill="#d9a584" />
      <path d="M14 15C12 5 17 0 25 0s13 5 10 16l-2-8c-6 1-12-1-16 0Z" fill="#c5c8d2" />
      <path d="M19 22c2-3 10-3 12 0 2 4-1 9-6 9s-8-5-6-9Z" fill="#e2e4ea" />
      <path d="M22 23.500c2-1 4-1 6 0" stroke="#8b6a5c" strokeWidth="1.300" />
      <path d="M17 13c2-1 4-1 5 0M28 13c2-1 4-1 5 0" stroke="#5b4038" strokeWidth="1.300" />
      <path d="M24 13.500v6h3" stroke="#b57f61" strokeWidth="1.200" />
      <circle cx="20" cy="15.500" r="3" stroke="#a38160" strokeWidth=".7" />
      <circle cx="30" cy="15.500" r="3" stroke="#a38160" strokeWidth=".7" />
      <path d="m21 32 7 2.500 7-2.500v7l-7-2.500-7 2.500Z" fill="#33588f" />
      <path d="M58 26h11v4l-1 15c-3 3-7 3-9 0l-1-15Z" fill="#ef7d3c" />
      <path d="M58 26h11v4H58Z" fill="#d7dde8" />
      <path d="M72 5h9v2h-1v15h-7V7h-1Z" fill="#9fbbe4" />
      <circle cx="76.500" cy="28.500" r="10" fill="#5fcf45" />
      <path d="M68 23c3-3 14-3 17 0" stroke="#c0efb0" strokeWidth="2" />
      <path d="M66 38h21M70 38l-3 10M84 38l3 10M74 38v8M80 38v8" stroke="#4c4f63" strokeWidth="1.600" />
    </Svg>
  );
}

function Task({ w, ml, under, children }: { w: string; ml: string; under?: string; children: React.ReactNode }) {
  return (
    <div className={`flex h-full shrink-0 flex-col items-center ${w} ${ml}`}>
      <div className="flex flex-1 items-center justify-center">{children}</div>
      <div className={`h-[3px] w-full ${under ?? ""}`} />
    </div>
  );
}

function Taskbar() {
  return (
    <div className={`mt-[4px] flex h-[50px] shrink-0 items-center bg-[#21333b] text-white ${UI}`}>
      <Svg w={20} h={20} className="ml-[20px]">
        <path d="M0 2.800 8.300 1.600v7.900H0ZM9.300 1.500 20 0v9.500H9.300ZM0 10.500h8.300v7.900L0 17.200ZM9.300 10.500H20V20L9.300 18.500Z" fill="#fff" />
      </Svg>
      <div className="ml-[20px] flex h-[50px] w-[360px] shrink-0 items-center border border-[#5c6060] bg-[#333] pl-[14px]">
        <Svg w={21} h={21}>
          <circle cx="13" cy="7.500" r="6.700" stroke="#ececec" strokeWidth="1.500" />
          <path d="M8.500 12.500.7 20.300" stroke="#ececec" strokeWidth="1.500" />
        </Svg>
        <Fit w={38} className="mt-px ml-[14px] text-[19px] leading-7 text-[#dedede]">搜索</Fit>
        <div className="ml-auto self-end"><Scientist /></div>
      </div>
      <Task w="w-[51px]" ml="ml-[8px]">
        <Svg w={30} h={30} vb="0 0 100 100" className="mt-[3px]">
          <path d="M0 38 8 31l67 51v18L71 98Z" fill="#0f7bc4" />
          <path d="M0 62l8 7L75 18V0L71 2Z" fill="#1a95dc" />
          <path d="M73 0l27 11v78L73 100Z" fill="#2fb0f5" />
          <path d="M75 28v44L46 50Z" fill="#21333b" />
        </Svg>
      </Task>
      <Task w="w-[51px]" ml="ml-[11px]">
        <Svg w={30} h={30} className="mt-[3px]">
          <circle cx="15" cy="15" r="14.800" fill="#f7f8fa" />
          <circle cx="15" cy="15" r="7.500" stroke="#555" strokeWidth="1.200" strokeDasharray="7 4.780" strokeDashoffset="-2.400" />
          <path d="M15 1 17.200 11.500h-4.400ZM15 29 12.800 18.500h4.400Z" fill="#2b6fb4" />
          <path d="M3.500 15 11 13.500v3ZM26.500 15 19 16.500v-3Z" fill="#555c66" />
          <path d="M15 11.500v7M11.500 15h7" stroke="#16406f" strokeWidth="2" />
          <circle cx="15" cy="15" r="1.300" fill="#fff" />
        </Svg>
      </Task>
      <Task w="w-[51px]" ml="ml-[11px]">
        <Svg w={30} h={30} className="mt-[3px]">
          <path d="M15 15 2.010 7.500A15 15 0 0 1 27.990 7.500L15 7.500Z" fill="#e33b2e" />
          <path d="M15 15 15 7.500H27.990A15 15 0 0 1 15 30L21.500 18.750Z" fill="#fbc116" />
          <path d="M15 15 21.500 18.750 15 30A15 15 0 0 1 2.010 7.500L8.500 18.750Z" fill="#2da44e" />
          <circle cx="15" cy="15" r="7.500" fill="#fff" />
          <circle cx="15" cy="15" r="6" fill="#3f7fe8" />
        </Svg>
      </Task>
      <Task w="w-[51px]" ml="ml-[11px]">
        <Svg w={27} h={22} className="mt-[1px]">
          <rect x=".6" y=".6" width="25.800" height="20.800" fill="#050505" stroke="#a9adb0" strokeWidth="1.200" />
          <path d="M1 2.500V1h25v1.500Z" fill="#c4c8ca" />
          <path d="M1.500 3h24v3C14 6 5 10 1.500 15Z" fill="#3a3d40" />
          <text x="2.500" y="8.500" fontSize="5.500" fill="#fff" fontFamily="Liberation Mono" fontWeight="bold">C:\_</text>
          <path d="M12 7.500h5" stroke="#fff" strokeWidth=".9" />
        </Svg>
      </Task>
      <Task w="w-[51px]" ml="ml-[11px]" under="bg-[#76b9ed]">
        <Svg w={30} h={29} className="mt-[3px]">
          <path d="M9 .5 13 5h8L25.500.5l1 9L29.500 29H6C1 29-1 24 1 22s5 0 3 2 1 2 2.500 1.500L8 9Z" fill="#4a4887" />
          <circle cx="12.500" cy="11.500" r="3.200" fill="#6b67ae" stroke="#a9a7d6" />
          <circle cx="22.500" cy="11.500" r="3.200" fill="#6b67ae" stroke="#a9a7d6" />
          <path d="M15.500 11.500h4" stroke="#a9a7d6" />
          <circle cx="12.500" cy="11.500" r="1.300" fill="#fff" />
          <circle cx="22.500" cy="11.500" r="1.300" fill="#fff" />
        </Svg>
      </Task>
      <Task w="w-[51px]" ml="ml-[11px]" under="bg-[#76b9ed]">
        <Svg w={28} h={23} className="mt-[1px]">
          <path d="M0 1a1 1 0 0 1 1-1h10l3 3v5H0Z" fill="#dd9410" />
          <path d="M0 4.500h11L14 2h13a1 1 0 0 1 1 1v18a1 1 0 0 1-1 1H1a1 1 0 0 1-1-1Z" fill="#ffd35c" />
          <path d="M5 23V14.500a2 2 0 0 1 2-2h14a2 2 0 0 1 2 2V23h-4.500v-5h-9v5Z" fill="#3a94dd" />
        </Svg>
      </Task>
      <Task w="w-[51px]" ml="ml-[11px]" under="bg-[#76b9ed]">
        <Svg w={30} h={30} className="mt-[3px]">
          <rect width="30" height="30" rx="5" fill="#fff" />
          <circle cx="8.600" cy="17.800" r="3.700" stroke="#15b8f2" strokeWidth="2.600" />
          <circle cx="21.400" cy="17.800" r="3.700" stroke="#1d9bf5" strokeWidth="2.600" />
          <path d="m11 15 4-2.500 4 2.500" stroke="#f2466a" strokeWidth="2.600" />
          <path d="m11.500 20 7-5M18.500 20l-7-5" stroke="#1fa8f5" strokeWidth="2" />
          <circle cx="15" cy="10" r="4.300" fill="#fff" stroke="#24b3f5" strokeWidth="2.600" />
          <path d="M10.900 11.500a4.300 4.300 0 0 0 8.200 0" stroke="#f2466a" strokeWidth="2.600" />
          <path d="M10 28.500h5v1.500h-5Z" fill="#f2466a" />
          <path d="M15 28.500h5v1.500h-5Z" fill="#1d9bf5" />
        </Svg>
      </Task>
      <div className="relative ml-[6px] flex h-full w-[61px] shrink-0 flex-col border-l-8 border-[#908e4a] bg-[#626c72]">
        <Svg w={29} h={31} className="mt-[11px] ml-[8px]">
          <rect width="28" height="28" rx="2" fill="#f0cf10" />
          <circle cx="14" cy="10" r="8" fill="#fff" />
          <path d="M12 6.300v7.400L18 10Z" fill="#c9a800" />
          <text x="4" y="25" fontSize="7.500" fontWeight="bold" fill="#3d3200" fontFamily="Liberation Sans">Player</text>
          <rect x="14.500" y="13.500" width="4" height="16" rx="1" fill="#ffea00" stroke="#1d1d1d" strokeWidth="1" />
          <rect x="23.500" y="13.500" width="4" height="16" rx="1" fill="#ffea00" stroke="#1d1d1d" strokeWidth="1" />
        </Svg>
        <div className="absolute bottom-0 left-[-8px] h-[3px] w-[61px] bg-[#fff200]" />
      </div>
      <Task w="w-[51px]" ml="ml-[6px]" under="bg-[#76b9ed]">
        <Svg w={20} h={27} className="mt-[2px]">
          <path d="M10 0 16 6l1 11 3 2-4 8-8-2-8-5L4 13 3 6Z" fill="#7b4bd6" />
          <path d="M10 0 4 7l-1 6 4 3 4-1Z" fill="#b79bf0" />
          <path d="m10 0 6 6 1 10-6-1Z" fill="#9a76ea" />
          <path d="M0 20 4 14l5 3-1 8Z" fill="#5c2db8" />
          <path d="m11 17 6 2 3 0-4 8-8-2Z" fill="#6a36cc" />
        </Svg>
      </Task>
      <div className="mr-px ml-auto flex h-full items-center">
        <Svg w={16} h={9}>
          <path d="M.7 8.300 8 1l7.300 7.300" stroke="#fff" strokeWidth="1.300" />
        </Svg>
        <Svg w={21} h={14} className="ml-[12px]">
          <path d="M5 3.500h13.500v9H5Z" fill="#fff" stroke="#fff" />
          <path d="M20 6v4M1.500 0v3M4.500 0v3M.5 3h5v3h-5ZM3 6v3.500h3" stroke="#fff" strokeWidth="1.200" />
        </Svg>
        <Svg w={21} h={17} className="ml-[9px]">
          <path d="M6 1.500h14v11H3V8M10.500 12.500v3M7 15.500h8M1 1h4v4H1ZM3 5v3" stroke="#fff" strokeWidth="1.200" />
        </Svg>
        <Svg w={21} h={18} className="ml-[9px]">
          <path d="M.7 6.500H4L8 2.500v13L4 11.500H.7Z" stroke="#fff" strokeWidth="1.100" />
          <path d="M10.500 7c1 1 1 3 0 4M13.500 4.500c2.500 2.500 2.500 6.500 0 9M16.500 2c4 4 4 10 0 14" stroke="#fff" strokeWidth="1.100" />
        </Svg>
        <Fit w={21} className="ml-[7px] text-[20px] leading-6 font-medium">英</Fit>
        <div className="ml-[8px] flex w-[84px] flex-col items-center text-[15px] leading-6">
          <Fit w={39}>14:42</Fit>
          <Fit w={84} className="mt-[-1px]">2023/12/27</Fit>
        </div>
        <div className="relative ml-[20px] h-full w-[45px] border-r border-[#7e898e]">
          <Svg w={20} h={20} className="absolute top-[15px] left-0">
            <path d="M0 0h20v16h-5v4l-4-4H0Z" fill="#fff" />
            <path d="M3.500 4.500h13M3.500 8h13M3.500 11.500h7" stroke="#21333b" strokeWidth="1.200" />
          </Svg>
          <div className="absolute top-[24px] left-[6px] flex h-[21px] w-[27px] items-center justify-center rounded-full border border-[#8b9296] bg-[#2c3336]">
            <Fit w={17} className="text-[14px] leading-4 font-bold">12</Fit>
          </div>
        </div>
        <div className="w-[5px]" />
      </div>
    </div>
  );
}

export default function App() {
  return (
    <div className="flex h-[1080px] w-[1920px] flex-col overflow-hidden bg-black">
      <TitleBar />
      <div className="mx-1 flex h-[984px] shrink-0 justify-between">
        <div className="flex w-[1515px] flex-col pt-px">
          <Video />
          <div className="h-[28px] shrink-0" />
          <SeekBar />
          <Controls />
        </div>
        <Playlist />
      </div>
      <Taskbar />
    </div>
  );
}
